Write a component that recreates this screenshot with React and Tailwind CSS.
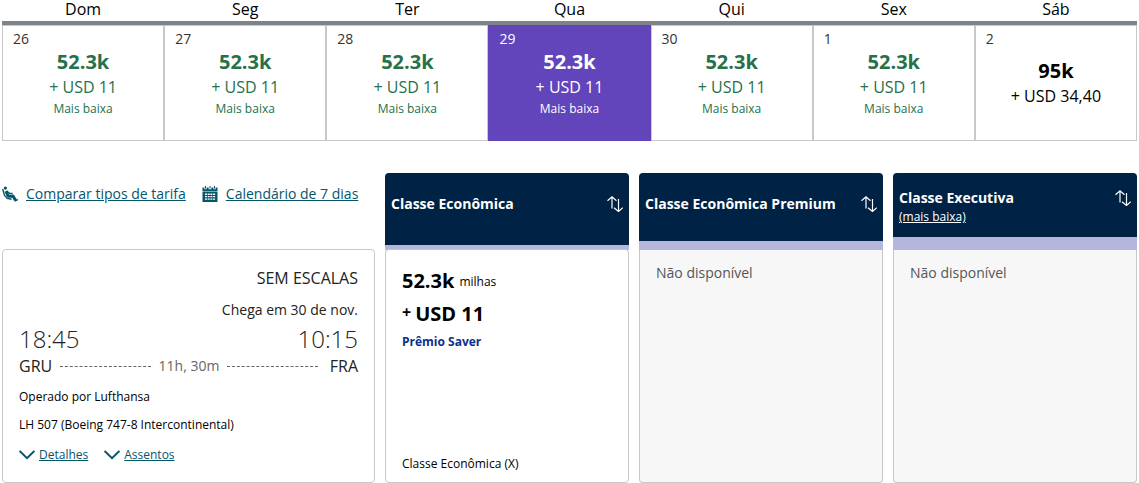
import React from "react";

const days = [
  { name: "Dom", date: "26", miles: "52.3k", fee: "+ USD 11", lowest: true },
  { name: "Seg", date: "27", miles: "52.3k", fee: "+ USD 11", lowest: true },
  { name: "Ter", date: "28", miles: "52.3k", fee: "+ USD 11", lowest: true },
  { name: "Qua", date: "29", miles: "52.3k", fee: "+ USD 11", lowest: true, selected: true },
  { name: "Qui", date: "30", miles: "52.3k", fee: "+ USD 11", lowest: true },
  { name: "Sex", date: "1", miles: "52.3k", fee: "+ USD 11", lowest: true },
  { name: "Sáb", date: "2", miles: "95k", fee: "+ USD 34,40" },
];

function dayColors(day) {
  if (day.selected) return "border-[#6244bb] bg-[#6244bb] text-white";
  if (day.lowest) return "border-[#c8c8c8] text-[#25714a]";
  return "border-[#c8c8c8] text-black";
}

function DayCell({ day }) {
  return (
    <td className="h-[116px] p-0">
      <button
        type="button"
        className={`flex h-full w-full flex-col border px-[10px] pt-[3px] ${dayColors(day)}`}
      >
        <span className={`text-left text-sm leading-5 ${day.selected ? "text-white" : "text-[#333]"}`}>
          {day.date}
        </span>
        <span className={`flex w-full flex-col items-center ${day.lowest ? "" : "pt-[9px]"}`}>
          <span className="text-xl leading-[26px] font-bold">{day.miles}</span>
          <span className="text-base leading-6">{day.fee}</span>
          {day.lowest && <span className="text-xs leading-5">Mais baixa</span>}
        </span>
      </button>
    </td>
  );
}

function SeatIcon() {
  return (
    <svg className="h-4 w-4 shrink-0" viewBox="0 0 16 16" fill="none" stroke="currentColor" aria-hidden="true">
      <circle cx="3.4" cy="2.1" r="1.6" fill="currentColor" stroke="none" />
      <path d="M.7 3 2.4 9.2l2.8 3.2 4.4.9" strokeWidth="1.4" />
      <path d="m3.9 5.2 2.3 5 4.8-.2 2.5 4.3" strokeWidth="3" strokeLinejoin="round" />
      <path d="m4.8 5 2.6 2.3h3.2" strokeWidth="1.3" />
      <path d="m12.6 15.2 3.2-1.7" strokeWidth="1.5" />
    </svg>
  );
}

function CalendarIcon() {
  return (
    <svg className="h-4 w-4 shrink-0" viewBox="0 0 16 16" fill="currentColor" aria-hidden="true">
      <path d="M.5 1.5h1.9v1.7h2.2V1.5h2v1.7h2.8V1.5h2v1.7h2.2V1.5h1.9V5H.5z" />
      <path d="M3 0h1v2.6H3zM12 0h1v2.6h-1zM7.5 0h1v2.6h-1z" />
      <path
        fillRule="evenodd"
        d="M.5 5.6h15V16H.5zM3 7.6v1.3h2V7.6zm2.7 0v1.3h2V7.6zm2.7 0v1.3h2V7.6zm2.7 0v1.3h2V7.6zM3 10v1.3h2V10zm2.7 0v1.3h2V10zm2.7 0v1.3h2V10zm2.7 0v1.3h2V10zM3 12.4v1.3h2v-1.3zm2.7 0v1.3h2v-1.3zm2.7 0v1.3h2v-1.3zm2.7 0v1.3h2v-1.3z"
      />
    </svg>
  );
}

function SortIcon() {
  return (
    <svg className="h-4 w-4" viewBox="0 0 16 16" fill="none" stroke="currentColor" strokeWidth="1.2" aria-hidden="true">
      <path d="M.5 4.7 5 .8l4.5 3.9M5 .8v11.7M7 11.7l4.5 3.8 4.3-3.8M11.5 15.5V3" />
    </svg>
  );
}

function ChevronIcon() {
  return (
    <svg className="h-4 w-4" viewBox="0 0 16 16" fill="none" stroke="currentColor" strokeWidth="2" aria-hidden="true">
      <path d="m.6 4 7.4 7.2L15.4 4" />
    </svg>
  );
}

function FareHeader({ title, note, band }) {
  return (
    <div className={`flex h-[77px] rounded-t border-[#b6b6dc] bg-[#002244] px-[6px] text-white ${band}`}>
      <div className="flex-1">
        <h2 className="text-sm leading-5 font-bold">{title}</h2>
        {note && (
          <a href="#lowest" className="block text-xs leading-[18px] underline">
            {note}
          </a>
        )}
      </div>
      <button type="button" aria-label={`Ordenar por ${title}`} className="flex h-5 items-center">
        <SortIcon />
      </button>
    </div>
  );
}

function Unavailable() {
  return (
    <div className="flex-1 rounded-b border border-t-0 border-[#c8c8c8] bg-[#f7f7f7] px-4 pt-[13px] text-sm leading-5 text-[#555]">
      Não disponível
    </div>
  );
}

function DashedLine() {
  return <span className="flex-1 border-t border-dashed border-[#666]" />;
}

function Toggle({ label }) {
  return (
    <button type="button" className="flex items-center gap-1 text-[#05566b]">
      <ChevronIcon />
      <span className="underline">{label}</span>
    </button>
  );
}

export default function App() {
  return (
    <main className="bg-white px-[2px] font-['Open_Sans','Noto_Sans',sans-serif] text-black">
      <table className="w-full table-fixed border-separate border-spacing-0">
        <thead>
          <tr>
            {days.map((day) => (
              <th
                key={day.name}
                scope="col"
                className="border-b-4 border-[#7d8387] p-0 pb-[3px] text-base leading-[18px] font-medium"
              >
                {day.name}
              </th>
            ))}
          </tr>
        </thead>
        <tbody>
          <tr>
            {days.map((day) => (
              <DayCell key={day.date} day={day} />
            ))}
          </tr>
        </tbody>
      </table>

      <section className="mt-8 grid grid-cols-[373fr_244fr_244fr_244fr] gap-x-[10px]">
        <div className="flex flex-col">
          <nav className="flex h-[76px] items-start gap-4 pt-[11px] text-sm leading-5 text-[#05566b]">
            <a href="#fares" className="flex items-center gap-2 whitespace-nowrap">
              <SeatIcon />
              <span className="underline">Comparar tipos de tarifa</span>
            </a>
            <a href="#calendar" className="flex items-center gap-2 whitespace-nowrap">
              <CalendarIcon />
              <span className="underline">Calendário de 7 dias</span>
            </a>
          </nav>
          <article className="flex-1 rounded border border-[#c8c8c8] px-4 pt-4 pb-[17px] text-xs leading-5">
            <p className="text-right text-base leading-6 text-[#222]">SEM ESCALAS</p>
            <p className="mt-[10px] text-right text-sm leading-5 text-[#222]">Chega em 30 de nov.</p>
            <div className="mt-1 flex justify-between text-2xl leading-[30px] font-light text-[#222]">
              <span>18:45</span>
              <span>10:15</span>
            </div>
            <div className="flex items-center gap-2 text-base leading-6 text-[#222]">
              <span>GRU</span>
              <DashedLine />
              <span className="text-sm text-[#666]">11h, 30m</span>
              <DashedLine />
              <span className="pl-1">FRA</span>
            </div>
            <p className="mt-[9px]">Operado por Lufthansa</p>
            <p className="mt-2">LH 507 (Boeing 747-8 Intercontinental)</p>
            <div className="mt-[10px] flex gap-4">
              <Toggle label="Detalhes" />
              <Toggle label="Assentos" />
            </div>
          </article>
        </div>

        <div className="flex flex-col">
          <FareHeader title="Classe Econômica" band="border-b-[5px] pt-[21px]" />
          <article className="-mt-px flex flex-1 flex-col rounded border border-[#c8c8c8] bg-white px-4 pt-[17px] pb-2">
            <p className="flex items-center gap-[5px]">
              <span className="text-xl leading-7 font-bold">52.3k</span>
              <span className="pt-[2px] text-xs">milhas</span>
            </p>
            <p className="mt-[5px] flex gap-1 text-xl leading-7 font-bold">
              <span className="text-base leading-6">+</span>
              <span>USD 11</span>
            </p>
            <p className="mt-1 text-xs leading-5 font-bold text-[#0c2f8c]">Prêmio Saver</p>
            <p className="mt-auto text-xs leading-5">Classe Econômica (X)</p>
          </article>
        </div>

        <div className="flex flex-col">
          <FareHeader title="Classe Econômica Premium" band="border-b-[9px] pt-[21px]" />
          <Unavailable />
        </div>

        <div className="flex flex-col">
          <FareHeader title="Classe Executiva" note="(mais baixa)" band="border-b-[13px] pt-[15px]" />
          <Unavailable />
        </div>
      </section>
    </main>
  );
}
